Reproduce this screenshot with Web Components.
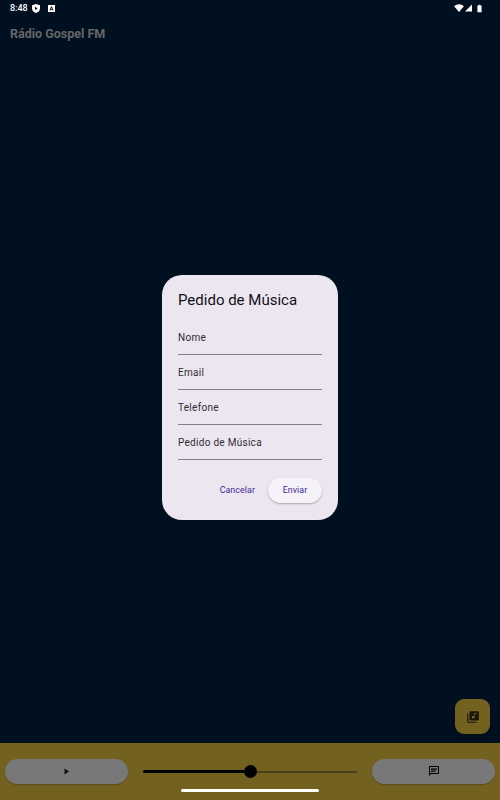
<!DOCTYPE html>
<html><head><meta charset="utf-8"><style>
html,body{margin:0;padding:0;height:100%;background:#011021;font-family:Roboto,"Liberation Sans",sans-serif}
</style></head><body>
<radio-app></radio-app>
<script>
function def(name,html){customElements.define(name,class extends HTMLElement{constructor(){super();this.attachShadow({mode:'open'}).innerHTML=html}})}
def('status-bar',`<style>
:host{display:flex;align-items:center;height:16px;padding:0 18px 0 10px;color:#fff;font:500 9px Roboto,sans-serif;gap:4px}
.r{margin-left:auto;display:flex;gap:1px;align-items:center}svg{display:block}
</style><span>8:48</span>
<svg width="8" height="9" viewBox="0 0 8 9"><path fill="#fff" d="M4 0L8 1.2V4.5C8 6.8 6.3 8.300 4 9C1.700 8.300 0 6.800 0 4.500V1.200Z"/><path fill="#011021" d="M3 2.700L5.600 4.400L3 6Z"/></svg>
<svg width="7" height="7" viewBox="0 0 7 7" style="margin-left:4px"><rect width="7" height="7" fill="#fff"/><path fill="#011021" d="M3 1.500H4L5.500 5.500H4.600L4.300 4.700H2.700L2.400 5.500H1.500ZM3 4H4L3.500 2.500Z"/></svg>
<div class="r">
<svg width="10" height="8" viewBox="0 0 11 9"><path fill="#fff" d="M0 2.500C3 -.5 8 -.5 11 2.500L5.500 9Z"/></svg>
<svg width="7" height="8" viewBox="0 0 8 8"><path fill="#fff" d="M8 0V8H0Z"/></svg>
<svg width="5" height="9" viewBox="0 0 6 9" style="margin-left:4px"><path fill="#fff" d="M2 0H4V1H5.500V9H.5V1H2Z"/></svg>
</div>`);
def('app-bar',`<style>:host{display:block;padding:10px 10px 0;color:#666;font:700 12.500px/15px Roboto,sans-serif}</style><slot></slot>`);
def('pill-button',`<style>
:host{display:flex;align-items:center;justify-content:center;width:123px;height:25px;border-radius:13px;background:#787878;box-shadow:0 1px 1px rgba(0,0,0,.2);flex:none}
</style><slot></slot>`);
def('audio-slider',`<style>
:host{display:flex;align-items:center;flex:1;height:25px;margin:0 15px}
.a{width:101px;height:3px;background:#000;border-radius:2px 0 0 2px}
.k{width:13px;height:13px;border-radius:50%;background:#000;flex:none}
.b{flex:1;height:2px;background:#4c401a;border-radius:0 1px 1px 0}
</style><div class="a"></div><div class="k"></div><div class="b"></div>`);
def('bottom-bar',`<style>
:host{display:flex;align-items:flex-start;height:38px;padding:16px 5px 3px;background:#736120;position:relative}
.h{position:absolute;left:181px;bottom:8px;width:138px;height:3px;border-radius:2px;background:#fff}
</style><slot></slot><div class="h"></div>`);
def('fab-button',`<style>
:host{position:absolute;right:10px;bottom:66px;width:35px;height:35px;border-radius:9px;background:#736120;display:flex;align-items:center;justify-content:center;box-shadow:0 2px 3px rgba(0,0,0,.3)}
</style><slot></slot>`);
def('text-field',`<style>
:host{display:block;height:34px;border-bottom:1px solid #857f8a;color:#2f2c33;font:400 10px/14px Roboto,sans-serif;letter-spacing:.28px}
div{padding-top:11px}
</style><div><slot></slot></div>`);
def('dialog-box',`<style>
:host{position:absolute;left:162px;top:275px;width:144px;padding:16px;height:213px;background:#ece6f0;border-radius:20px;display:flex;flex-direction:column}
h2{margin:0 0 11px;font:400 15px/18px Roboto,sans-serif;color:#111016}
.f{display:flex;flex-direction:column}
.acts{display:flex;justify-content:flex-end;align-items:center;margin-top:18px;gap:13px}
.c,.e{font:400 8.800px/12px Roboto,sans-serif;color:#3f2a94;letter-spacing:.1px}
.c{padding-bottom:1px}
.e{width:54px;height:25px;line-height:25px;text-align:center;border-radius:13px;background:#f6f2f9;box-shadow:0 1px 2px rgba(0,0,0,.28)}
</style><h2>Pedido de Música</h2><div class="f"><slot></slot></div>
<div class="acts"><span class="c">Cancelar</span><span class="e">Enviar</span></div>`);
def('radio-app',`<style>
:host{display:flex;flex-direction:column;width:500px;height:800px;position:relative;overflow:hidden;background:#011021}
.m{flex:1}
</style>
<status-bar></status-bar><app-bar>Rádio Gospel FM</app-bar><div class="m"></div>
<fab-button><svg width="14" height="14" viewBox="0 0 24 24"><path fill="#1a1608" d="M4 6H2v14c0 1.100.9 2 2 2h14v-2H4V6z"/><path fill="#1a1608" d="M20 2H8c-1.100 0-2 .9-2 2v12c0 1.100.9 2 2 2h12c1.100 0 2-.9 2-2V4c0-1.100-.9-2-2-2zm-2 5h-3v5.500a2.500 2.500 0 1 1-2.500-2.500c.6 0 1.100.2 1.500.5V5h4v2z"/></svg></fab-button>
<bottom-bar>
<pill-button><svg width="7" height="7" viewBox="0 0 7 7"><path fill="#111" d="M1.500 .5L6 3.500L1.500 6.500Z"/></svg></pill-button>
<audio-slider></audio-slider>
<pill-button><svg width="12" height="12" viewBox="0 0 24 24" style="margin-top:-1px"><path fill="#000" d="M20 2H4c-1.100 0-2 .9-2 2v18l4-4h14c1.100 0 2-.9 2-2V4c0-1.100-.9-2-2-2zm0 14H5.200L4 17.200V4h16v12zM6 7h12v2.500H6zm0 4h9v2.500H6z"/></svg></pill-button>
</bottom-bar>
<dialog-box><text-field>Nome</text-field><text-field>Email</text-field><text-field>Telefone</text-field><text-field>Pedido de Música</text-field></dialog-box>`);
</script></body></html>
